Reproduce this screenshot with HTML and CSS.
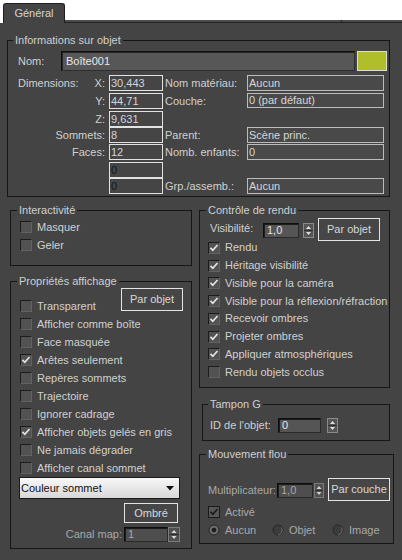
FILE: index.html
```html
<!DOCTYPE html>
<html>
<head>
<meta charset="utf-8">
<title>Propriétés de l'objet</title>
<link rel="stylesheet" href="styles.css">
</head>
<body>
<div class="tabbar">
  <div class="tab">Général</div>
  <div class="tabrest"></div>
  <div class="tabrest end"></div>
</div>

<fieldset class="grp g-info">
  <legend>Informations sur objet</legend>
  <div class="name-row">
    <span class="nom">Nom:</span>
    <div class="namefield">Boîte001</div>
    <div class="swatch"></div>
  </div>
  <div class="dims">
    <div class="c1 first"><span>Dimensions:</span><span>X:</span></div>
    <div class="fld">30,443</div>
    <div class="c3">Nom matériau:</div>
    <div class="fld2">Aucun</div>

    <div class="c1">Y:</div>
    <div class="fld">44,71</div>
    <div class="c3">Couche:</div>
    <div class="fld2 short">0 (par défaut)</div>

    <div class="c1">Z:</div>
    <div class="fld">9,631</div>
    <div class="c3"></div>
    <div></div>

    <div class="c1">Sommets:</div>
    <div class="fld">8</div>
    <div class="c3">Parent:</div>
    <div class="fld2">Scène princ.</div>

    <div class="c1">Faces:</div>
    <div class="fld">12</div>
    <div class="c3">Nomb. enfants:</div>
    <div class="fld2">0</div>

    <div class="c1"></div>
    <div class="fld dark">0</div>
    <div class="c3"></div>
    <div></div>

    <div class="c1"></div>
    <div class="fld dark">0</div>
    <div class="c3">Grp./assemb.:</div>
    <div class="fld2">Aucun</div>
  </div>
</fieldset>

<div class="cols">
  <div class="lcol">
    <fieldset class="grp g-inter">
      <legend>Interactivité</legend>
      <div class="list">
        <div class="cbrow"><span class="cb"></span>Masquer</div>
        <div class="cbrow"><span class="cb"></span>Geler</div>
      </div>
    </fieldset>

    <fieldset class="grp g-props">
      <legend>Propriétés affichage</legend>
      <div class="row1">
        <div class="cbrow"><span class="cb"></span>Transparent</div>
        <div class="btn">Par objet</div>
      </div>
      <div class="cbrow"><span class="cb"></span>Afficher comme boîte</div>
      <div class="cbrow"><span class="cb"></span>Face masquée</div>
      <div class="cbrow"><span class="cb on"><svg width="10" height="10" viewBox="0 0 10 10"><path d="M1.5 4.8 L3.8 7.3 L8.5 2" fill="none" stroke="#e4e4e4" stroke-width="1.7"/></svg></span>Arêtes seulement</div>
      <div class="cbrow"><span class="cb"></span>Repères sommets</div>
      <div class="cbrow"><span class="cb"></span>Trajectoire</div>
      <div class="cbrow"><span class="cb"></span>Ignorer cadrage</div>
      <div class="cbrow"><span class="cb on"><svg width="10" height="10" viewBox="0 0 10 10"><path d="M1.5 4.8 L3.8 7.3 L8.5 2" fill="none" stroke="#e4e4e4" stroke-width="1.7"/></svg></span>Afficher objets gelés en gris</div>
      <div class="cbrow"><span class="cb"></span>Ne jamais dégrader</div>
      <div class="cbrow"><span class="cb"></span>Afficher canal sommet</div>
      <div class="dd"><span>Couleur sommet</span><svg width="8" height="5" viewBox="0 0 8 5"><path d="M0 0 H8 L4 4.5Z" fill="#111"/></svg></div>
      <div class="btn ombre">Ombré</div>
      <div class="canal">
        <span class="clbl dis">Canal map:</span>
        <div class="spinfld dim">1</div>
        <svg class="spin" width="12" height="15" viewBox="0 0 12 15"><rect x=".5" y=".5" width="11" height="14" fill="#505050" stroke="#7c7c7c"/><line x1="1" y1="7.5" x2="11" y2="7.5" stroke="#2e2e2e"/><path d="M3.5 6 L6 3 L8.5 6Z" fill="#d8d8d8"/><path d="M3.5 9 L6 12 L8.5 9Z" fill="#d8d8d8"/></svg>
      </div>
    </fieldset>
  </div>

  <div class="rcol">
    <fieldset class="grp g-rendu">
      <legend>Contrôle de rendu</legend>
      <div class="visrow">
        <span class="vlbl">Visibilité:</span>
        <div class="spinfld vfld">1,0</div>
        <svg class="spin vspin" width="11" height="15" viewBox="0 0 11 15"><rect x=".5" y=".5" width="10" height="14" fill="#555" stroke="#8a8a8a"/><line x1="1" y1="7.5" x2="10" y2="7.5" stroke="#2e2e2e"/><path d="M3 6 L5.5 3 L8 6Z" fill="#e0e0e0"/><path d="M3 9 L5.5 12 L8 9Z" fill="#e0e0e0"/></svg>
        <div class="btn vbtn">Par objet</div>
      </div>
      <div class="cbrow"><span class="cb on"><svg width="10" height="10" viewBox="0 0 10 10"><path d="M1.5 4.8 L3.8 7.3 L8.5 2" fill="none" stroke="#e4e4e4" stroke-width="1.7"/></svg></span>Rendu</div>
      <div class="cbrow"><span class="cb on"><svg width="10" height="10" viewBox="0 0 10 10"><path d="M1.5 4.8 L3.8 7.3 L8.5 2" fill="none" stroke="#e4e4e4" stroke-width="1.7"/></svg></span>Héritage visibilité</div>
      <div class="cbrow"><span class="cb on"><svg width="10" height="10" viewBox="0 0 10 10"><path d="M1.5 4.8 L3.8 7.3 L8.5 2" fill="none" stroke="#e4e4e4" stroke-width="1.7"/></svg></span>Visible pour la caméra</div>
      <div class="cbrow"><span class="cb on"><svg width="10" height="10" viewBox="0 0 10 10"><path d="M1.5 4.8 L3.8 7.3 L8.5 2" fill="none" stroke="#e4e4e4" stroke-width="1.7"/></svg></span>Visible pour la réflexion/réfraction</div>
      <div class="cbrow"><span class="cb on"><svg width="10" height="10" viewBox="0 0 10 10"><path d="M1.5 4.8 L3.8 7.3 L8.5 2" fill="none" stroke="#e4e4e4" stroke-width="1.7"/></svg></span>Recevoir ombres</div>
      <div class="cbrow"><span class="cb on"><svg width="10" height="10" viewBox="0 0 10 10"><path d="M1.5 4.8 L3.8 7.3 L8.5 2" fill="none" stroke="#e4e4e4" stroke-width="1.7"/></svg></span>Projeter ombres</div>
      <div class="cbrow"><span class="cb on"><svg width="10" height="10" viewBox="0 0 10 10"><path d="M1.5 4.8 L3.8 7.3 L8.5 2" fill="none" stroke="#e4e4e4" stroke-width="1.7"/></svg></span>Appliquer atmosphériques</div>
      <div class="cbrow"><span class="cb"></span>Rendu objets occlus</div>
    </fieldset>

    <fieldset class="grp g-tampon">
      <legend>Tampon G</legend>
      <div class="idrow">
        <span class="idlbl">ID de l'objet:</span>
        <div class="spinfld idfld">0</div>
        <svg class="spin idspin" width="11" height="15" viewBox="0 0 11 15"><rect x=".5" y=".5" width="10" height="14" fill="#555" stroke="#8a8a8a"/><line x1="1" y1="7.5" x2="10" y2="7.5" stroke="#2e2e2e"/><path d="M3 6 L5.5 3 L8 6Z" fill="#e0e0e0"/><path d="M3 9 L5.5 12 L8 9Z" fill="#e0e0e0"/></svg>
      </div>
    </fieldset>

    <fieldset class="grp g-flou">
      <legend>Mouvement flou</legend>
      <div class="multrow">
        <span class="mlbl dis">Multiplicateur:</span>
        <div class="spinfld mfld dim">1,0</div>
        <svg class="spin mspin" width="10" height="15" viewBox="0 0 10 15"><rect x=".5" y=".5" width="9" height="14" fill="#505050" stroke="#7c7c7c"/><line x1="1" y1="7.5" x2="9" y2="7.5" stroke="#2e2e2e"/><path d="M2.5 6 L5 3 L7.5 6Z" fill="#d0d0d0"/><path d="M2.5 9 L5 12 L7.5 9Z" fill="#d0d0d0"/></svg>
        <div class="btn mbtn">Par couche</div>
      </div>
      <div class="cbrow dis"><span class="cb cbdis"><svg width="10" height="10" viewBox="0 0 10 10"><path d="M1.5 4.8 L3.8 7.3 L8.5 2" fill="none" stroke="#1a1a1a" stroke-width="1.6"/></svg></span>Activé</div>
      <div class="radrow dis">
        <div class="ri r1"><svg class="rd" width="12" height="12" viewBox="0 0 12 12"><circle cx="6" cy="6" r="5" fill="#6a6a6a" stroke="#262626"/><circle cx="6" cy="6" r="2.3" fill="#1c1c1c"/></svg>Aucun</div>
        <div class="ri r2"><svg class="rd" width="12" height="12" viewBox="0 0 12 12"><circle cx="6" cy="6" r="5" fill="#3c3c3c" stroke="#262626"/><path d="M9.5 3.5 A5 5 0 0 1 6 11" fill="none" stroke="#6e6e6e"/></svg>Objet</div>
        <div class="ri r3"><svg class="rd" width="12" height="12" viewBox="0 0 12 12"><circle cx="6" cy="6" r="5" fill="#3c3c3c" stroke="#262626"/><path d="M9.5 3.5 A5 5 0 0 1 6 11" fill="none" stroke="#6e6e6e"/></svg>Image</div>
      </div>
    </fieldset>
  </div>
</div>
</body>
</html>
```

FILE: styles.css
```css
* { box-sizing: border-box; }
html, body { margin: 0; padding: 0; }
body {
  background: #444444;
  font-family: "Liberation Sans", Arial, sans-serif;
  font-size: 11px;
  line-height: 13px;
  color: #d0d0d0;
  width: 402px;
  height: 560px;
  overflow: hidden;
}

/* tab strip */
.tabbar { display: flex; align-items: flex-end; height: 23px; background: #ffffff; }
.tab {
  margin-left: 3px; width: 62px; height: 20px;
  background: #444444; border: 1px solid #1e1e1e; border-bottom: none;
  border-radius: 3px 3px 0 0;
  text-align: center; line-height: 19px; color: #d4d4d4;
}
.tabrest { flex: 1; height: 3px; background: #4b4b4b; border-bottom: 1px solid #232323; }
.tabrest.end { flex: 0 0 61px; border-left: 1px solid #232323; }

/* groups */
.grp { margin: 0; padding: 0; border: 1px solid #161616; min-width: 0; display: block; }
.grp > legend { padding: 0 2px; margin-left: 6px; line-height: 13px; color: #cfcfcf; }

.g-info { margin: 11px 0 0 7px; width: 383px; height: 163px; }
.g-info > legend { margin-left: 5px; }

.name-row { display: flex; align-items: center; margin-top: 4px; height: 20px; padding-left: 10px; }
.nom { width: 43px; }
.namefield {
  width: 294px; height: 20px; background: #575757;
  border: 1px solid; border-color: #101010 #2e2e2e #2e2e2e #101010;
  box-shadow: inset 1px 1px 0 #262626;
  padding-left: 4px; line-height: 18px; color: #e8e8e8;
}
.swatch { width: 30px; height: 20px; margin-left: 2px; background: #afbe2a; border: 1px solid #dcdcdc; }

.dims {
  display: grid;
  grid-template-columns: 91px 54px 84px 137px;
  grid-template-rows: 18px 18px 16px 17px 18px 16px 16px;
  margin-top: 4px; padding-left: 10px;
}
.c1 { text-align: right; padding-right: 4px; height: 16px; line-height: 16px; }
.c1.first { display: flex; justify-content: space-between; }
.fld {
  height: 16px; border: 1px solid #e2e2e2; background: #454545;
  line-height: 14px; padding-left: 1px; color: #d2d4de;
}
.fld.dark { color: #151515; }
.c3 { padding-left: 2px; height: 16px; line-height: 16px; }
.fld2 {
  height: 16px; border: 1px solid #bcbcbc; background: #494949;
  line-height: 14px; padding-left: 1px; color: #d6d6d6;
}
.fld2.short { height: 15px; line-height: 13px; }

/* columns */
.cols { display: flex; margin-top: 7px; }
.lcol { margin-left: 10px; width: 182px; display: flex; flex-direction: column; }
.rcol { margin-left: 7px; display: flex; flex-direction: column; }

.g-inter { height: 62px; }
.g-inter .list { padding-top: 1px; }
.g-props { height: 274px; margin-top: 9px; }
.g-rendu { width: 191px; height: 184px; }
.g-tampon { width: 188px; height: 43px; margin: 10px 0 0 3px; }
.g-tampon > legend { margin-left: 5px; }
.g-flou { width: 195px; height: 96px; margin-top: 7px; }

/* checkboxes */
.cbrow { display: flex; align-items: center; height: 18px; white-space: nowrap; }
.g-inter .cbrow, .g-props .cbrow { padding-left: 9px; }
.g-rendu .cbrow { padding-left: 8px; height: 17.75px; }
.g-flou .cbrow { padding-left: 8px; }
.cb {
  width: 12px; height: 12px; flex: none; margin-right: 5px;
  border: 1px solid; border-color: #1c1c1c #626262 #626262 #1c1c1c;
  background: #525252;
  display: flex; align-items: center; justify-content: center;
}
.cb.cbdis { border-color: #1a1a1a; background: #575757; }

/* buttons */
.btn {
  border: 1px solid #e4e4e4; background: #464646; color: #d8d8d8;
  display: flex; align-items: center; justify-content: center;
}

.row1 { display: flex; height: 27px; padding-right: 8px; }
.row1 .cbrow { align-self: flex-end; }
.row1 .btn { margin-left: auto; width: 62px; height: 23px; }

.dd {
  display: flex; align-items: center; justify-content: space-between;
  width: 161px; height: 22px; margin-left: 8px;
  background: linear-gradient(#f8f8f8, #d8d8d8);
  border: 1px solid #1a1a1a; color: #111;
  padding: 0 5px 0 1px;
}
.ombre { margin: 4px 0 0 113px; width: 54px; height: 20px; }

.canal { display: flex; margin-top: 4px; height: 15px; }
.clbl { width: 111px; text-align: right; line-height: 15px; }
.spinfld {
  height: 15px; background: #555555;
  border: 1px solid; border-color: #0e0e0e #2a2a2a #2a2a2a #0e0e0e;
  box-shadow: inset 1px 1px 0 #1c1c1c;
  padding-left: 3px; line-height: 13px; color: #e6e6e6;
}
.canal .spinfld { width: 44px; margin-left: 2px; }
.spin { flex: none; display: block; }

.dis { color: #a8a8a8; }
.spinfld.dim { color: #a8a8a8; background: #4e4e4e; }

/* rendu */
.visrow { display: flex; align-items: flex-start; height: 21px; margin-top: 1px; padding-left: 10px; }
.vlbl { width: 53px; margin-top: 4px; }
.vfld { width: 36px; margin-top: 5px; }
.vspin { margin: 5px 0 0 4px; }
.vbtn { margin-left: 4px; width: 62px; height: 23px; }

/* tampon */
.idrow { display: flex; margin-top: 7px; padding-left: 7px; height: 15px; }
.idlbl { width: 68px; line-height: 15px; }
.idfld { width: 43px; }
.idspin { margin-left: 6px; }

/* flou */
.multrow { display: flex; align-items: flex-start; margin-top: 17px; height: 22px; padding-left: 8px; }
.mlbl { width: 69px; margin-top: 6px; white-space: nowrap; }
.mfld { width: 36px; margin-top: 5px; }
.mspin { margin: 5px 0 0 1px; }
.mbtn { margin-left: 4px; width: 62px; height: 23px; }
.g-flou .cbrow { margin-top: 3px; }
.radrow { display: flex; align-items: center; height: 18px; padding-left: 8px; }
.ri { display: flex; align-items: center; }
.r1 { width: 64px; }
.r2 { width: 60px; }
.rd { flex: none; margin-right: 5px; display: block; }
```
